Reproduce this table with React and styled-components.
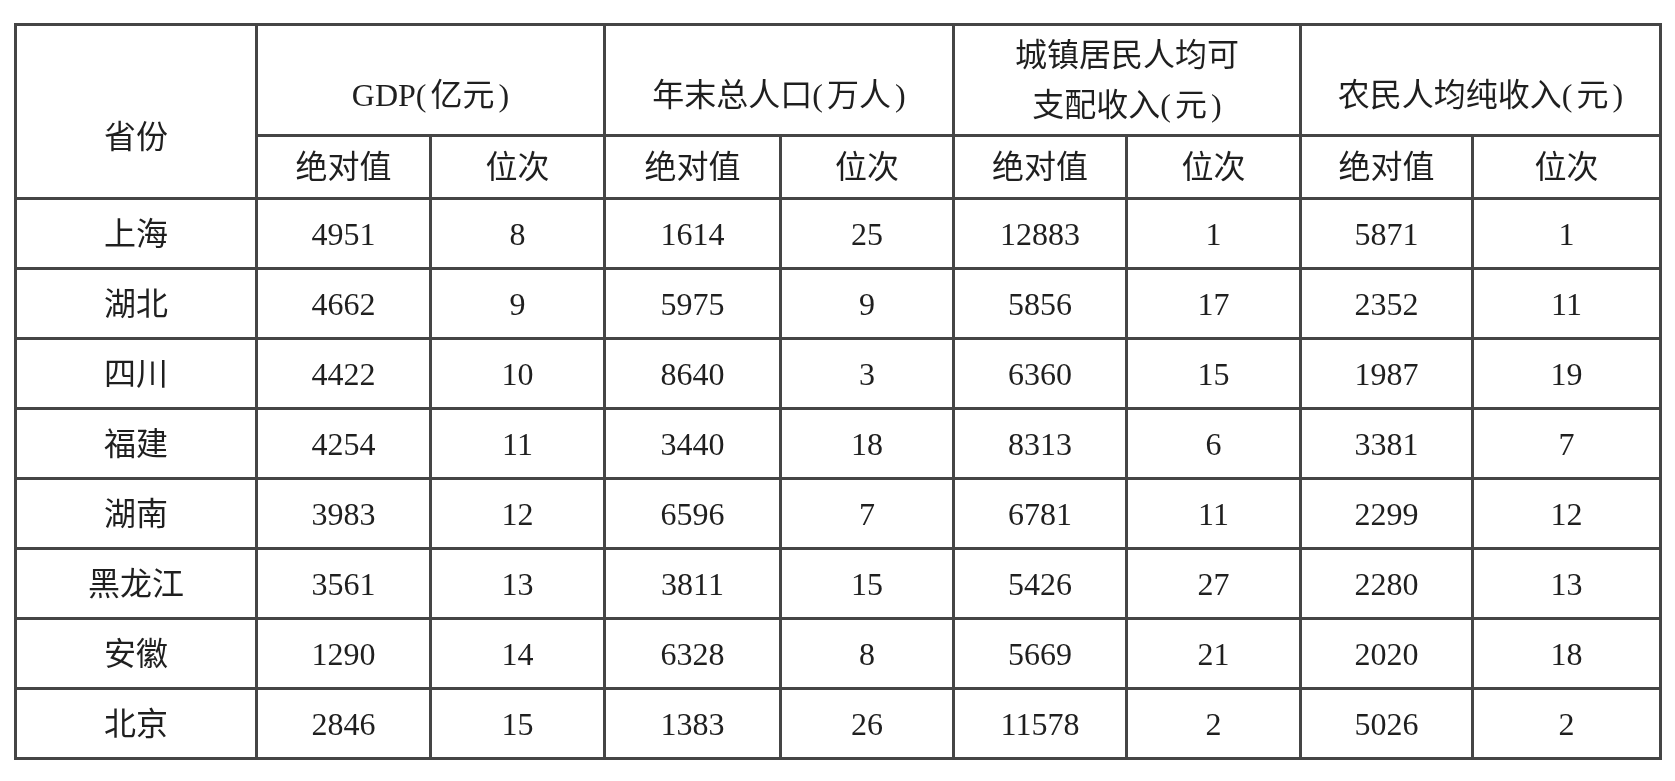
import styled, { createGlobalStyle } from 'styled-components';

const GlobalStyle = createGlobalStyle`
  html, body {
    margin: 0;
    padding: 0;
    background-color: #ffffff;
  }
  body {
    font-family: "Liberation Serif", "Noto Sans CJK SC", serif;
    color: #1f1f1f;
  }
`;

const Page = styled.div`
  width: 1675px;
  height: 781px;
  box-sizing: border-box;
  padding: 23px 0 0 14px;
  background-color: #ffffff;
  overflow: hidden;
`;

// the scan is soft, so the whole table gets a touch of blur
const Table = styled.table`
  border-collapse: collapse;
  table-layout: fixed;
  width: 1647px;
  font-size: 32px;
  filter: blur(0.35px);
`;

const HeadRow = styled.tr`
  height: ${(p) => p.height}px;
`;

const BodyRow = styled.tr`
  height: 70px;
`;

const Cell = styled.td`
  border: 3px solid #454545;
  padding: ${(p) => (p.shift ? `${p.shift}px 0 0 0` : '0')};
  text-align: center;
  vertical-align: middle;
  line-height: ${(p) => p.lineHeight || 36}px;
  white-space: nowrap;
  font-weight: 400;
`;

const Paren = styled.span`
  display: inline-block;
  padding: ${(p) => (p.side === 'open' ? '0 4px 0 0' : '0 0 0 4px')};
`;

const columns = [241, 174, 174, 176, 173, 173, 174, 172, 188];

function Title({ main, unit }) {
  return (
    <>
      {main}
      <Paren side="open">(</Paren>
      {unit}
      <Paren side="close">)</Paren>
    </>
  );
}

const groups = [
  { lines: [['GDP', '亿元']], shift: 30 },
  { lines: [['年末总人口', '万人']], shift: 30 },
  { lines: [['城镇居民人均可'], ['支配收入', '元']], shift: 0 },
  { lines: [['农民人均纯收入', '元']], shift: 30 },
];

const rows = [
  ['上海', 4951, 8, 1614, 25, 12883, 1, 5871, 1],
  ['湖北', 4662, 9, 5975, 9, 5856, 17, 2352, 11],
  ['四川', 4422, 10, 8640, 3, 6360, 15, 1987, 19],
  ['福建', 4254, 11, 3440, 18, 8313, 6, 3381, 7],
  ['湖南', 3983, 12, 6596, 7, 6781, 11, 2299, 12],
  ['黑龙江', 3561, 13, 3811, 15, 5426, 27, 2280, 13],
  ['安徽', 1290, 14, 6328, 8, 5669, 21, 2020, 18],
  ['北京', 2846, 15, 1383, 26, 11578, 2, 5026, 2],
];

export default function App() {
  return (
    <Page>
      <GlobalStyle />
      <Table>
        <colgroup>
          {columns.map((w, i) => (
            <col key={i} style={{ width: w }} />
          ))}
        </colgroup>
        <thead>
          <HeadRow height={111}>
            <Cell as="th" rowSpan={2} shift={50}>省份</Cell>
            {groups.map((g, i) => (
              <Cell as="th" key={i} colSpan={2} shift={g.shift} lineHeight={g.lines.length > 1 ? 50 : 36}>
                {g.lines.map(([main, unit], j) => (
                  <div key={j}>
                    {unit ? <Title main={main} unit={unit} /> : main}
                  </div>
                ))}
              </Cell>
            ))}
          </HeadRow>
          <HeadRow height={63}>
            {groups.map((g, i) => [
              <Cell as="th" key={`a${i}`}>绝对值</Cell>,
              <Cell as="th" key={`b${i}`}>位次</Cell>,
            ])}
          </HeadRow>
        </thead>
        <tbody>
          {rows.map((r) => (
            <BodyRow key={r[0]}>
              {r.map((v, i) => (
                <Cell key={i}>{v}</Cell>
              ))}
            </BodyRow>
          ))}
        </tbody>
      </Table>
    </Page>
  );
}
